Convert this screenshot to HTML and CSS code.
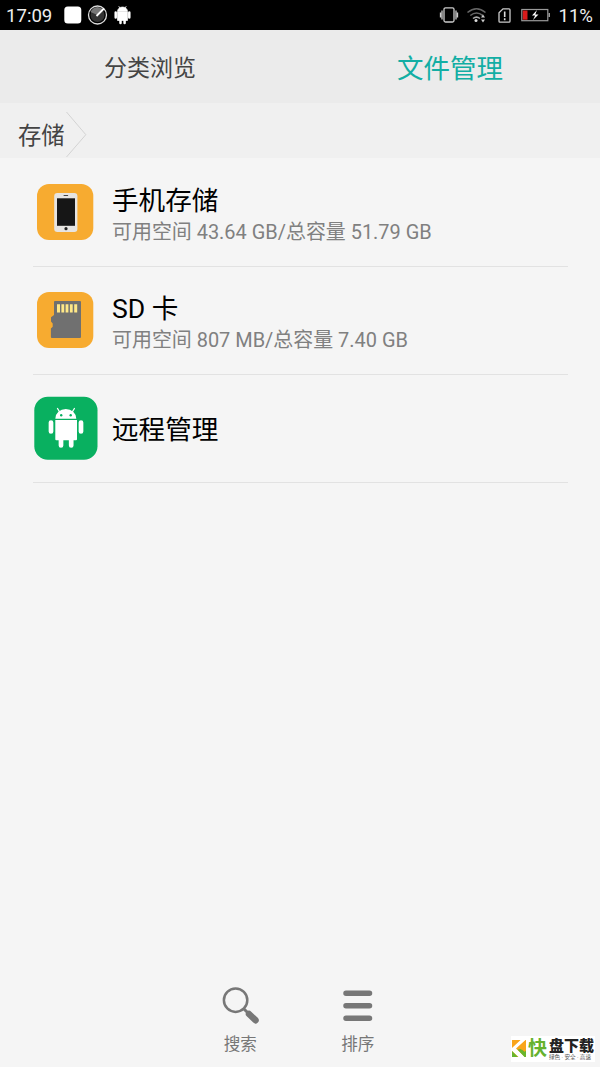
FILE: index.html
```html
<!DOCTYPE html>
<html lang="zh-CN">
<head>
<meta charset="utf-8">
<title>文件管理</title>
<link rel="stylesheet" href="styles.css">
</head>
<body>
<div class="screen">
  <header class="status">
    <span class="clock">17:09</span>
    <svg class="status-left" width="70" height="30" viewBox="62 0 70 30">
      <rect x="64.3" y="6.5" width="17" height="17" rx="3.5" fill="#fff"/>
      <circle cx="97.5" cy="15" r="7" fill="#333"/>
      <path d="M97.5 15L103 9.5A7.5 7.5 0 0 0 90.5 12z" fill="#777"/>
      <circle cx="97.5" cy="15" r="9" fill="none" stroke="#ddd" stroke-width="1.3"/>
      <path d="M96.5 16L104 8.5" stroke="#fff" stroke-width="1.8"/>
      <path d="M117.5 11.5a5 4.5 0 0 1 10 0zM117.5 12h10v8.5h-10zM118.7 6l1.5 3M126.3 6l-1.5 3" fill="#fff" stroke="#fff" stroke-width=".7"/>
      <path d="M115.7 12.5v5M129.3 12.5v5M120.5 19v4M124.6 19v4" stroke="#fff" stroke-width="2.5" stroke-linecap="round"/>
    </svg>
    <svg class="status-right" width="118" height="30" viewBox="436 0 118 30" fill="none">
      <g stroke="#ccc" stroke-width="1.3">
        <rect x="444" y="7.8" width="10" height="14.2" rx="1.5"/>
        <path d="M442 10.5v9M440.5 12.5v5M456 10.5v9M457.5 12.5v5"/>
      </g>
      <g stroke="#666" stroke-width="1.6">
        <path d="M467.5 12.5q9-7.5 18 0M470.3 15.5q6.2-5 12.5 0"/>
        <path d="M473 18.5q3.5-2.8 7 0" stroke="#aaa"/>
      </g>
      <circle cx="476" cy="20.6" r="1.5" fill="#ddd"/>
      <path d="M483 14.5l2 3h-4zM483 22.5l2-3h-4z" fill="#ccc"/>
      <path d="M503 8.8h6a1 1 0 0 1 1 1v11.4a1 1 0 0 1-1 1h-9a1 1 0 0 1-1-1V12.7z" stroke="#ccc" stroke-width="1.3"/>
      <path d="M504.7 11.5v5.5M504.7 18.2v2" stroke="#ddd" stroke-width="1.6"/>
      <rect x="521.8" y="9.5" width="26" height="11.2" stroke="#999" stroke-width="1.2"/>
      <path d="M548.5 13h1.5v4h-1.5z" fill="#999"/>
      <path d="M522.8 10.5h4.7v9.2h-4.7z" fill="#d91b1b"/>
      <path d="M537 10l-5 5.5h3.2L533 20l5.5-5.6h-3.2z" fill="#fff"/>
    </svg>
    <span class="battery">11%</span>
  </header>

  <nav class="tabs">
    <div class="tab">分类浏览</div>
    <div class="tab active">文件管理</div>
  </nav>

  <div class="crumbs">
    <span>存储</span>
    <svg width="22" height="48" viewBox="0 0 22 48" fill="none"><path d="M.5 1L19.800 23.700L.5 46" stroke="#d3d3d3" stroke-width="1"/></svg>
  </div>

  <main class="list">
    <div class="item">
      <svg class="icon" width="64" height="64" viewBox="33 180 64 64">
        <rect x="37" y="184" width="56.3" height="56" rx="12" fill="#f7ab30"/>
        <rect x="54.2" y="193" width="23.2" height="39" rx="3.2" fill="#e6e4e1"/>
        <rect x="57" y="198.3" width="18" height="27.5" fill="#161616"/>
        <rect x="63.5" y="195" width="4.7" height="1" rx=".5" fill="#444"/>
        <circle cx="66" cy="228.7" r="1.6" fill="#222"/>
      </svg>
      <div class="copy">
        <div class="title">手机存储</div>
        <div class="sub">可用空间 43.64 GB/总容量 51.79 GB</div>
      </div>
    </div>
    <div class="item">
      <svg class="icon" width="64" height="64" viewBox="33 288 64 64">
        <rect x="37" y="292" width="56.3" height="56" rx="12" fill="#f7ab30"/>
        <path d="M55.5 301H80a1 1 0 0 1 1 1v35a1 1 0 0 1-1 1H51.9a1 1 0 0 1-1-1v-8.5l1.8-1.700v-3.300L51 321.500v-4.300l3-2.200v-13a1 1 0 0 1 1-1z" fill="#707070"/>
        <path d="M57 304.2h3v8.2h-3zM61.4 304.2h2.8v8.2h-2.8zM65.6 304.2h2.8v8.2h-2.8zM69.9 304.2h2.8v8.2h-2.8zM74.2 304.2h3v8.2h-3z" fill="#ffe887"/>
      </svg>
      <div class="copy">
        <div class="title">SD 卡</div>
        <div class="sub">可用空间 807 MB/总容量 7.40 GB</div>
      </div>
    </div>
    <div class="item">
      <svg class="icon" width="65" height="64" viewBox="33 396 65 64">
        <rect x="34.3" y="396.7" width="63.2" height="63" rx="13.5" fill="#09b060"/>
        <path d="M55.3 418.8a10.5 9.8 0 0 1 21 0zM55.3 420h21.7v19.3a1 1 0 0 1-1 1H56.3a1 1 0 0 1-1-1z" fill="#fff"/>
        <path d="M57.5 408.5l2.5 4M74.4 408.5l-2.5 4" stroke="#fff" stroke-width="1.3" stroke-linecap="round"/>
        <path d="M51 422.5v9M81 422.5v9M61 438v7.5M71.2 438v7.5" stroke="#fff" stroke-width="4.7" stroke-linecap="round"/>
        <circle cx="61.2" cy="415.3" r="1.2" fill="#09b060"/><circle cx="70.7" cy="415.3" r="1.2" fill="#09b060"/>
      </svg>
      <div class="copy single"><div class="title">远程管理</div></div>
    </div>
  </main>

  <footer class="toolbar">
    <div class="tool">
      <svg width="40" height="40" viewBox="220 985 40 40" fill="none" stroke="#777">
        <circle cx="235.6" cy="1000.2" r="11.7" stroke-width="2.5"/>
        <path d="M243.500 1008.500l4 4" stroke-width="3"/>
        <path d="M249 1014l6.500 6.200" stroke-width="6.500" stroke-linecap="round"/>
      </svg>
      <span>搜索</span>
    </div>
    <div class="tool">
      <svg width="40" height="40" viewBox="338 985 40 40"><path d="M346 993.200h23.500M346 1005.700h23.500M346 1018.200h23.500" stroke="#777" stroke-width="5.500" stroke-linecap="round"/></svg>
      <span>排序</span>
    </div>
  </footer>

  <div class="watermark">
    <svg width="14" height="18" viewBox="0 0 14 18">
      <path d="M0 0H14V17H0z" fill="#f9a51b"/>
      <path d="M0 12L5 17H0zM14 17V11.500L11 8.500L8 11.500z" fill="#69b62e"/>
      <path d="M13.500 0L4 8.500L13 17H6.500L0 11V7L8 0z" fill="#fff"/>
      <path d="M0 0H8.500L0 8z" fill="#f9a51b"/>
      <path d="M0 11l6 6H0zM9 9l5 5v3h-1.500L5.500 9.500z" fill="#69b62e"/>
      <path d="M13 1v11L6.500 7z" fill="#f9a51b"/>
    </svg>
    <span class="wm-green">快</span>
    <div class="wm-copy"><span class="wm-name">盘下载</span><span class="wm-tag">绿色 · 安全 · 高速</span></div>
  </div>
</div>
</body>
</html>
```
FILE: styles.css
```css
* { box-sizing: border-box; }
body { margin: 0; }
.screen {
  position: relative;
  display: flex;
  flex-direction: column;
  width: 600px;
  height: 1067px;
  overflow: hidden;
  background: #f5f5f5;
  font-family: Roboto, "Noto Sans CJK SC", sans-serif;
}
.screen svg { display: block; flex: none; }
.status {
  display: flex;
  align-items: center;
  height: 30px;
  padding: 0 7px 0 6px;
  background: #000;
  color: #eee;
  font-size: 18.6px;
  line-height: 30px;
}
.clock { width: 56px; padding-top: 2px; }
.status-right { margin-left: auto; }
.battery { width: 39px; padding-top: 2px; text-align: right; white-space: nowrap; }
.tabs { display: flex; height: 73px; background: #ebebeb; }
.tab {
  flex: 1;
  text-align: center;
  font-size: 23px;
  line-height: 78px;
  color: #444;
}
.tab.active { font-size: 26.5px; line-height: 77px; color: #12aea4; }
.crumbs {
  display: flex;
  align-items: center;
  height: 55px;
  padding: 8px 0 0 18px;
  gap: 2px;
  background: #f0f0f0;
  color: #444;
  font-size: 23.3px;
}
.crumbs span { width: 46px; padding-top: 2px; line-height: 48px; white-space: nowrap; }
.list { flex: 1; padding: 1px 32px 0 33px; }
.item {
  display: flex;
  align-items: center;
  height: 108px;
  gap: 15px;
  border-bottom: 1px solid #e2e2e2;
}
.icon { margin-bottom: 2px; }
.item:last-child .icon { margin-right: -1px; }
.title { font-size: 26.6px; line-height: 36px; color: #000; }
.sub { margin-top: -1px; font-size: 19.95px; line-height: 28px; color: #808080; white-space: nowrap; }
.copy { padding-top: 4px; }
.copy.single { padding-top: 2px; }
.toolbar {
  display: flex;
  justify-content: center;
  gap: 77.5px;
  height: 82px;
  padding-right: 2px;
}
.tool {
  display: flex;
  flex-direction: column;
  align-items: center;
  gap: 8px;
  width: 40px;
  font-size: 16.6px;
  line-height: 24px;
  color: #777;
}
.watermark {
  position: absolute;
  left: 511px;
  top: 1036px;
  display: flex;
  align-items: center;
  width: 84px;
  height: 26px;
  padding-left: 1px;
  background: #fff;
}
.wm-green { width: 23px; text-align: center; font-size: 19px; line-height: 26px; font-weight: 700; color: #65b22e; }
.wm-copy { display: flex; flex-direction: column; width: 46px; padding-top: 1px; white-space: nowrap; }
.wm-name { font-size: 15px; line-height: 14px; font-weight: 900; color: #222; }
.wm-tag { font-size: 5.6px; line-height: 8px; color: #555; }
```
